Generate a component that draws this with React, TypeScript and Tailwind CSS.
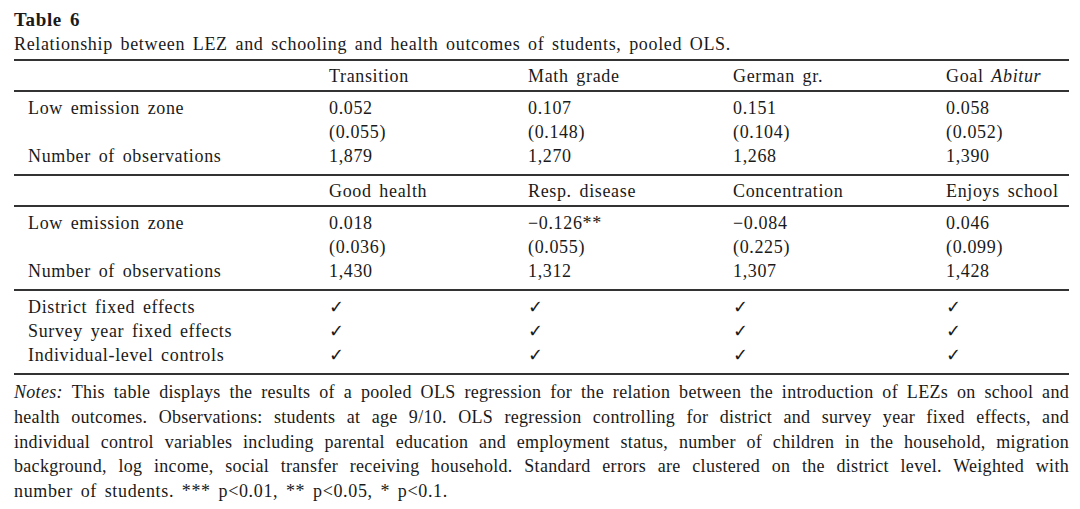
const serif = { fontFamily: '"Liberation Serif", "Times New Roman", serif' };

type Row = { label: string; cells: React.ReactNode[] };

const cols = 'grid grid-cols-[315px_199px_205px_213px_1fr]';

function HeaderRow({ cells }: { cells: React.ReactNode[] }) {
  return (
    <div className={`${cols} h-[31px] items-center border-b-2 border-[#333]`}>
      <div />
      {cells.map((c, i) => (
        <div key={i}>{c}</div>
      ))}
    </div>
  );
}

function Block({ rows, last }: { rows: Row[]; last?: boolean }) {
  return (
    <div className={`pt-[4px] pb-[6px] ${last ? '' : 'border-b-2 border-[#333]'}`}>
      {rows.map((r, i) => (
        <div key={i} className={`${cols} h-[24px] items-center`}>
          <div className="pl-[14px]">{r.label}</div>
          {r.cells.map((c, j) => (
            <div key={j}>{c}</div>
          ))}
        </div>
      ))}
    </div>
  );
}

const check = '✓';

const notes = [
  'This table displays the results of a pooled OLS regression for the relation between the introduction of LEZs on school and',
  'health outcomes. Observations: students at age 9/10. OLS regression controlling for district and survey year fixed effects, and',
  'individual control variables including parental education and employment status, number of children in the household, migration',
  'background, log income, social transfer receiving household. Standard errors are clustered on the district level. Weighted with',
];

export default function App() {
  return (
    <div
      className="w-[1080px] h-[509px] bg-white text-[#1a1a1a] text-[18px] leading-[24px] tracking-[0.65px] [word-spacing:2.6px]"
      style={serif}
    >
      <div className="pl-[14px] pr-[11px] pt-[8px]">
        <div className="font-bold text-[19px] leading-[24px]">Table 6</div>
        <div className="leading-[24px] pb-[3px]">Relationship between LEZ and schooling and health outcomes of students, pooled OLS.</div>

        <div className="border-t-2 border-[#333]">
          <HeaderRow
            cells={[
              'Transition',
              'Math grade',
              'German gr.',
              <span key="g">
                Goal <i>Abitur</i>
              </span>,
            ]}
          />
          <Block
            rows={[
              { label: 'Low emission zone', cells: ['0.052', '0.107', '0.151', '0.058'] },
              { label: '', cells: ['(0.055)', '(0.148)', '(0.104)', '(0.052)'] },
              { label: 'Number of observations', cells: ['1,879', '1,270', '1,268', '1,390'] },
            ]}
          />
          <HeaderRow cells={['Good health', 'Resp. disease', 'Concentration', 'Enjoys school']} />
          <Block
            rows={[
              { label: 'Low emission zone', cells: ['0.018', '−0.126**', '−0.084', '0.046'] },
              { label: '', cells: ['(0.036)', '(0.055)', '(0.225)', '(0.099)'] },
              { label: 'Number of observations', cells: ['1,430', '1,312', '1,307', '1,428'] },
            ]}
          />
          <Block
            rows={[
              { label: 'District fixed effects', cells: [check, check, check, check] },
              { label: 'Survey year fixed effects', cells: [check, check, check, check] },
              { label: 'Individual-level controls', cells: [check, check, check, check] },
            ]}
          />
        </div>

        <div className="pt-[5px] leading-[24.75px] tracking-[0.3px] [word-spacing:0px]">
          {notes.map((line, i) => (
            <div key={i} className="whitespace-nowrap text-justify [text-align-last:justify]">
              {i === 0 && <i>Notes: </i>}
              {line}
            </div>
          ))}
          <div className="tracking-[0.65px] [word-spacing:2.6px]">
            number of students. *** p&lt;0.01, ** p&lt;0.05, * p&lt;0.1.
          </div>
        </div>
      </div>
    </div>
  );
}
